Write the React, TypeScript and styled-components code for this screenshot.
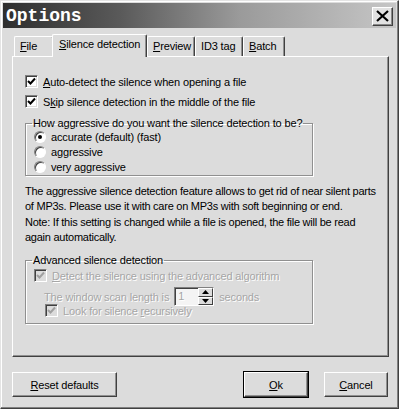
import React, { useState } from 'react';
import styled, { createGlobalStyle } from 'styled-components';

const GlobalStyle = createGlobalStyle`
  html, body {
    margin: 0;
    padding: 0;
    background: #dcdcdc;
  }
  body {
    font-family: "Liberation Sans", Arial, sans-serif;
    font-size: 11px;
    letter-spacing: -0.15px;
    color: #000;
  }
`;

const tabs = [
  { key: 'file', label: 'File', ul: 0, w: 40 },
  { key: 'silence', label: 'Silence detection', ul: 0, w: 95 },
  { key: 'preview', label: 'Preview', ul: 0, w: 48 },
  { key: 'id3', label: 'ID3 tag', ul: -1, w: 48 },
  { key: 'batch', label: 'Batch', ul: 0, w: 42 },
];

// draw a label with one underlined accelerator letter
const Accel: React.FC<{ text: string; at: number }> = ({ text, at }) => {
  if (at < 0) return <>{text}</>;
  return (
    <>
      {text.slice(0, at)}
      <u>{text[at]}</u>
      {text.slice(at + 1)}
    </>
  );
};

const CheckMark: React.FC<{ color: string }> = ({ color }) => (
  <svg width="9" height="9" viewBox="0 0 9 9">
    <path d="M1 4 L3.5 6.5 L8 1.5" stroke={color} strokeWidth="2" fill="none" />
  </svg>
);

const App: React.FC = () => {
  const [active, setActive] = useState('silence');
  const [mode, setMode] = useState(0);
  const [auto, setAuto] = useState(true);
  const [skip, setSkip] = useState(true);

  const modes = ['accurate (default) (fast)', 'aggressive', 'very aggressive'];

  return (
    <>
      <GlobalStyle />
      <Window>
        <TitleBar>
          <Title>Options</Title>
          <CloseButton aria-label="close">
            <svg width="13" height="12" viewBox="0 0 13 12">
              <path d="M1 1 L12 11 M12 1 L1 11" stroke="#000" strokeWidth="2.2" />
            </svg>
          </CloseButton>
        </TitleBar>

        <Body>
          <TabRow>
            {tabs.map((t) => (
              <Tab
                key={t.key}
                $width={t.w}
                $active={active === t.key}
                onClick={() => setActive(t.key)}
              >
                <Accel text={t.label} at={t.ul} />
              </Tab>
            ))}
          </TabRow>

          <Panel>
            <CheckRow onClick={() => setAuto(!auto)}>
              <Box>{auto && <CheckMark color="#000" />}</Box>
              <span>
                <Accel text="Auto-detect the silence when opening a file" at={0} />
              </span>
            </CheckRow>
            <CheckRow onClick={() => setSkip(!skip)}>
              <Box>{skip && <CheckMark color="#000" />}</Box>
              <span>
                <Accel text="Skip silence detection in the middle of the file" at={1} />
              </span>
            </CheckRow>

            <Group $height={59}>
              <Legend>How aggressive do you want the silence detection to be?</Legend>
              {modes.map((m, i) => (
                <RadioRow key={m} onClick={() => setMode(i)}>
                  <Radio>{mode === i && <Dot />}</Radio>
                  <span>{m}</span>
                </RadioRow>
              ))}
            </Group>

            <Para>
              The aggressive silence detection feature allows to get rid of near silent parts
              <br />
              of MP3s. Please use it with care on MP3s with soft beginning or end.
            </Para>
            <Para>
              Note: If this setting is changed while a file is opened, the file will be read
              <br />
              again automatically.
            </Para>

            <Group $height={70} $top={9}>
              <Legend>Advanced silence detection</Legend>
              <DisabledRow $top={3}>
                <Box $disabled>
                  <CheckMark color="#a0a0a0" />
                </Box>
                <span>
                  <Accel text="Detect the silence using the advanced algorithm" at={0} />
                </span>
              </DisabledRow>
              <SpinRow>
                <span>The window scan length is</span>
                <Spin>
                  <SpinValue>1</SpinValue>
                  <SpinButtons>
                    <SpinBtn>
                      <svg width="7" height="4" viewBox="0 0 7 4">
                        <path d="M0 4 L3.5 0 L7 4 Z" fill="#000" />
                      </svg>
                    </SpinBtn>
                    <SpinBtn>
                      <svg width="7" height="4" viewBox="0 0 7 4">
                        <path d="M0 0 L3.5 4 L7 0 Z" fill="#000" />
                      </svg>
                    </SpinBtn>
                  </SpinButtons>
                </Spin>
                <span>seconds</span>
              </SpinRow>
              <DisabledRow $indent={11} $top={-2}>
                <Box $disabled>
                  <CheckMark color="#a0a0a0" />
                </Box>
                <span>
                  <Accel text="Look for silence recursively" at={17} />
                </span>
              </DisabledRow>
            </Group>
          </Panel>

          <ButtonRow>
            <Button $width={105}>
              <Accel text="Reset defaults" at={0} />
            </Button>
            <Spacer />
            <Button $width={64} $default>
              <Accel text="Ok" at={0} />
            </Button>
            <Button $width={64}>
              <Accel text="Cancel" at={0} />
            </Button>
          </ButtonRow>
        </Body>
      </Window>
    </>
  );
};

// Styled Components
const Window = styled.div`
  width: 399px;
  height: 409px;
  box-sizing: border-box;
  background: #dcdcdc;
  border-top: 1px solid #e4e4e4;
  border-left: 1px solid #e4e4e4;
  border-right: 1px solid #404040;
  border-bottom: 1px solid #404040;
  padding: 2px;
  display: flex;
  flex-direction: column;
  box-shadow: inset -1px -1px 0 #808080, inset 1px 1px 0 #fff;
`;

const TitleBar = styled.div`
  height: 25px;
  display: flex;
  align-items: center;
  justify-content: space-between;
  padding: 0 3px 0 3px;
  background: linear-gradient(to right, #2e2e2e 0%, #5a5a5a 30%, #9a9a9a 60%, #c6c6c6 100%);
`;

const Title = styled.div`
  font-family: "Liberation Mono", "Courier New", monospace;
  font-weight: bold;
  font-size: 18px;
  color: #fff;
  letter-spacing: 0;
  line-height: 25px;
  margin-top: 1px;
`;

const CloseButton = styled.button`
  width: 21px;
  height: 19px;
  padding: 0;
  margin-top: 1px;
  display: flex;
  align-items: center;
  justify-content: center;
  background: #e2e2e2;
  border: 1px solid;
  border-color: #fff #404040 #404040 #fff;
  box-shadow: inset -1px -1px 0 #888;
`;

const Body = styled.div`
  flex: 1;
  display: flex;
  flex-direction: column;
  padding: 5px 7px 0 9px;
`;

const TabRow = styled.div`
  display: flex;
  align-items: flex-end;
  height: 23px;
  padding-left: 2px;
  position: relative;
  z-index: 1;
`;

const Tab = styled.div<{ $active?: boolean; $width: number }>`
  box-sizing: border-box;
  width: ${(p) => p.$width}px;
  height: ${(p) => (p.$active ? '23px' : '20px')};
  padding: 3px 0 0 ${(p) => (p.$active ? 6 : 5)}px;
  margin: ${(p) => (p.$active ? '0 0 -1px -2px' : '0')};
  background: #dcdcdc;
  border-top: 1px solid #fff;
  border-left: 1px solid #fff;
  border-right: 1px solid #404040;
  box-shadow: inset -1px 0 0 #909090;
  border-radius: 2px 2px 0 0;
  white-space: nowrap;
  cursor: default;
  position: relative;
  z-index: ${(p) => (p.$active ? 2 : 1)};
`;

const Panel = styled.div`
  height: 301px;
  box-sizing: border-box;
  border-top: 1px solid #fff;
  border-left: 1px solid #fff;
  border-right: 1px solid #404040;
  border-bottom: 1px solid #404040;
  box-shadow: inset -1px -1px 0 #909090;
  padding: 18px 6px 0 12px;
  display: flex;
  flex-direction: column;
`;

const CheckRow = styled.label<{ $top?: number }>`
  display: flex;
  align-items: center;
  gap: 5px;
  height: 13px;
  margin-top: ${(p) => p.$top || 0}px;
  margin-bottom: 7px;
  white-space: nowrap;
`;

const DisabledRow = styled(CheckRow)<{ $indent?: number }>`
  color: #a6a6a6;
  text-shadow: 1px 1px 0 #fff;
  margin-left: ${(p) => p.$indent || 0}px;
  margin-bottom: 0;
`;

const Box = styled.span<{ $disabled?: boolean }>`
  box-sizing: border-box;
  width: 13px;
  height: 13px;
  flex-shrink: 0;
  display: flex;
  align-items: center;
  justify-content: center;
  background: ${(p) => (p.$disabled ? '#dcdcdc' : '#fff')};
  border-top: 1px solid #808080;
  border-left: 1px solid #808080;
  border-right: 1px solid #fff;
  border-bottom: 1px solid #fff;
  box-shadow: inset 1px 1px 0 #404040, inset -1px -1px 0 #dcdcdc;
`;

const Group = styled.fieldset<{ $height: number; $top?: number }>`
  box-sizing: border-box;
  width: 288px;
  height: ${(p) => p.$height}px;
  margin: ${(p) => p.$top || 2}px 0 0 0;
  padding: 0 0 0 8px;
  border: 1px solid #909090;
  box-shadow: 1px 1px 0 #fff, inset 1px 1px 0 #fff;
  display: flex;
  flex-direction: column;
`;

const Legend = styled.legend`
  padding: 0 1px;
  margin-left: -2px;
  line-height: 12px;
  white-space: nowrap;
`;

const RadioRow = styled.label`
  display: flex;
  align-items: center;
  gap: 5px;
  height: 15px;
  white-space: nowrap;
`;

const Radio = styled.span`
  box-sizing: border-box;
  width: 12px;
  height: 12px;
  border-radius: 50%;
  background: #fff;
  border: 1px solid;
  border-color: #808080 #fff #fff #808080;
  box-shadow: inset 1px 1px 0 #404040;
  display: flex;
  align-items: center;
  justify-content: center;
`;

const Dot = styled.span`
  width: 4px;
  height: 4px;
  border-radius: 50%;
  background: #000;
`;

const Para = styled.p`
  margin: 8px 0 0 0;
  line-height: 15px;
  white-space: nowrap;
  letter-spacing: -0.25px;

  & + & {
    margin-top: 1px;
  }
`;

const SpinRow = styled.div`
  display: flex;
  align-items: center;
  gap: 5px;
  margin: 5px 0 0 10px;
  color: #a6a6a6;
  text-shadow: 1px 1px 0 #fff;
`;

const Spin = styled.div`
  display: flex;
  box-sizing: border-box;
  width: 40px;
  height: 19px;
  background: #f4f4f4;
  border-top: 1px solid #808080;
  border-left: 1px solid #808080;
  border-right: 1px solid #fff;
  border-bottom: 1px solid #fff;
  box-shadow: inset 1px 1px 0 #404040;
`;

const SpinValue = styled.span`
  flex: 1;
  padding: 2px 0 0 3px;
  color: #a6a6a6;
`;

const SpinButtons = styled.div`
  display: flex;
  flex-direction: column;
  width: 15px;
`;

const SpinBtn = styled.span`
  flex: 1;
  display: flex;
  align-items: center;
  justify-content: center;
  background: #dcdcdc;
  border-top: 1px solid #fff;
  border-left: 1px solid #fff;
  border-right: 1px solid #404040;
  border-bottom: 1px solid #404040;
`;

const ButtonRow = styled.div`
  display: flex;
  gap: 16px;
  margin-top: 15px;
  padding-left: 0;
  padding-right: 1px;
`;

const Spacer = styled.div`
  flex: 1;
`;

const Button = styled.button<{ $width: number; $default?: boolean }>`
  box-sizing: border-box;
  width: ${(p) => p.$width}px;
  height: 25px;
  padding: 0;
  font-family: "Liberation Sans", Arial, sans-serif;
  font-size: 11px;
  letter-spacing: -0.15px;
  color: #000;
  background: #dcdcdc;
  border-top: 1px solid #fff;
  border-left: 1px solid #fff;
  border-right: 1px solid #404040;
  border-bottom: 1px solid #404040;
  box-shadow: inset -1px -1px 0 #909090;
  outline: ${(p) => (p.$default ? '1px solid #000' : 'none')};
  outline-offset: 0;
`;

export default App;
